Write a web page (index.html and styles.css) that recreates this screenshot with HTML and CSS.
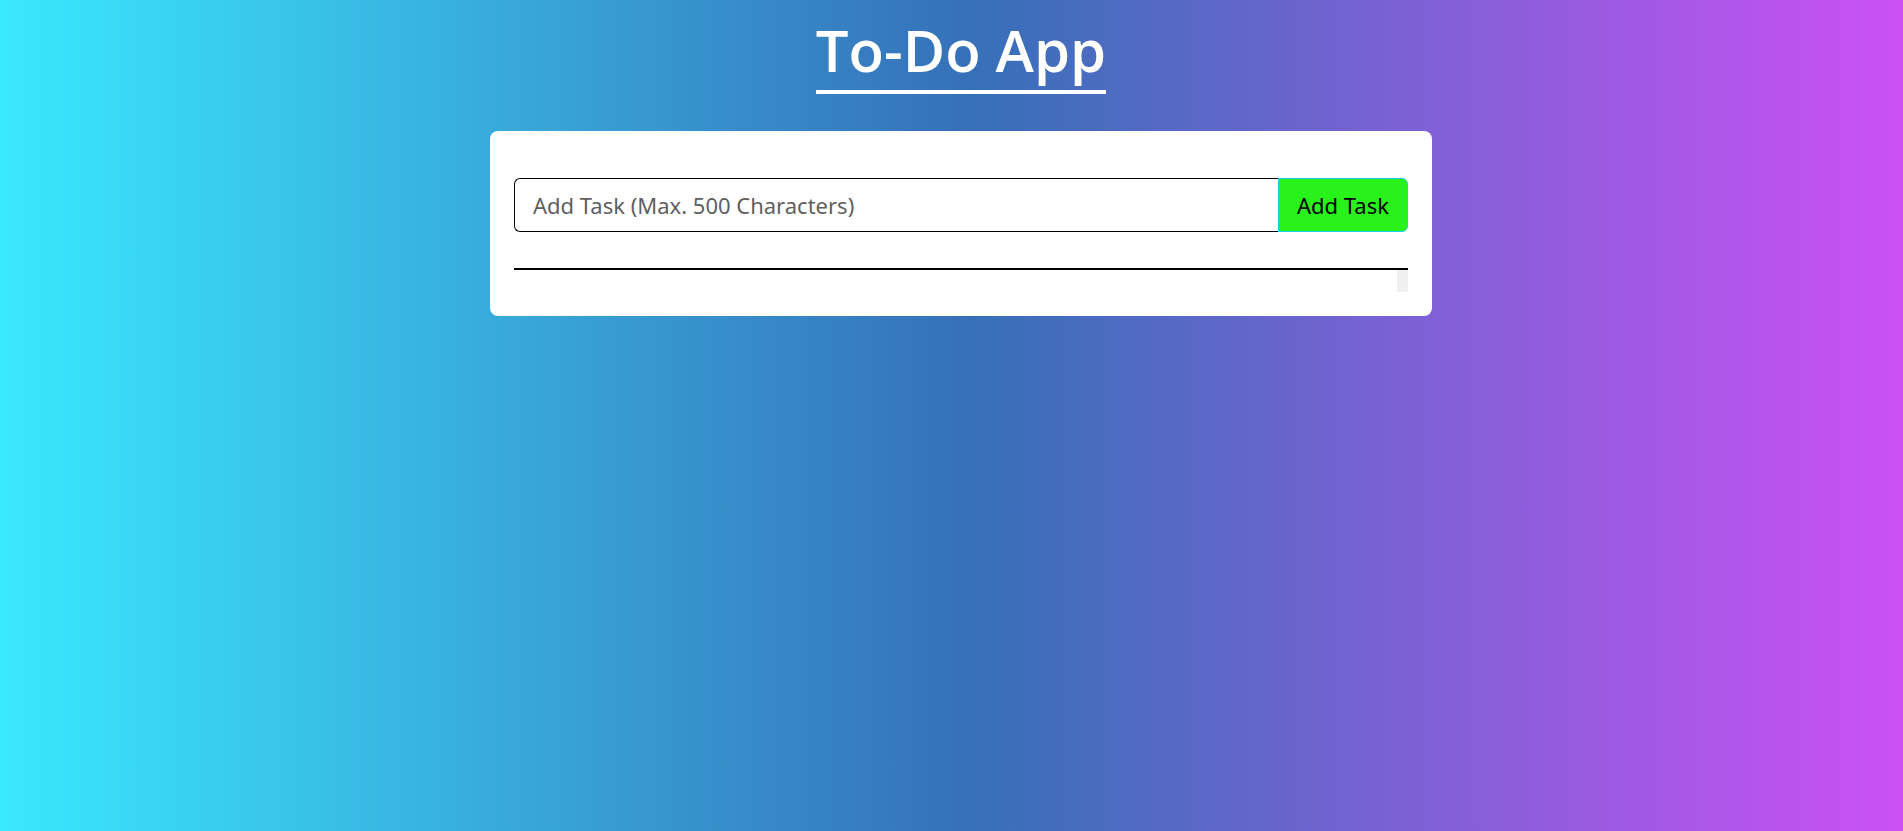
FILE: index.html
```html
<!DOCTYPE html>
<html lang="en">
<head>
<meta charset="utf-8">
<title>To-Do App</title>
<link rel="stylesheet" href="styles.css">
</head>
<body>
<main class="page">
  <h1 class="title">To-Do App</h1>
  <section class="card">
    <form class="add-form">
      <input class="task-input" type="text" placeholder="Add Task (Max. 500 Characters)">
      <button class="add-btn" type="button">Add Task</button>
    </form>
    <div class="task-list">
      <div class="list-body"></div>
      <div class="scroll-track"></div>
    </div>
  </section>
</main>
</body>
</html>
```
FILE: styles.css
```css
html, body {
  margin: 0;
  padding: 0;
  height: 100%;
}
body {
  background: linear-gradient(to right, #3ae8ff 0%, #3670b8 51%, #cc50f5 100%);
  font-family: "Noto Sans", "Open Sans", sans-serif;
  min-height: 831px;
}
.page {
  display: flex;
  flex-direction: column;
  align-items: center;
  padding-left: 19px;
}
.title {
  margin: 14px 0 0 0;
  color: #fff;
  font-family: "Open Sans", "Noto Sans", sans-serif;
  font-weight: 600;
  font-size: 58px;
  line-height: 72px;
  padding-bottom: 4px;
  border-bottom: 4px solid #fff;
}
.card {
  margin-top: 37px;
  width: 942px;
  box-sizing: border-box;
  background: #fff;
  border-radius: 8px;
  padding: 47px 24px 24px 24px;
}
.add-form {
  display: flex;
  margin: 0;
}
.task-input {
  flex: 1;
  height: 54px;
  box-sizing: border-box;
  border: 1px solid #000;
  border-right: none;
  border-radius: 6px 0 0 6px;
  padding: 0 18px;
  font-family: "Noto Sans", "Open Sans", sans-serif;
  font-size: 22px;
  color: #222;
  outline: none;
}
.task-input::placeholder {
  color: #5f5f5f;
}
.add-btn {
  width: 130px;
  height: 54px;
  box-sizing: border-box;
  background: #29f21b;
  border: 1px solid #1ad0e8;
  border-radius: 0 6px 6px 0;
  font-family: "Noto Sans", "Open Sans", sans-serif;
  font-size: 22px;
  color: #000;
  padding: 0;
}
.task-list {
  display: flex;
  margin-top: 36px;
  border-top: 2px solid #000;
  height: 22px;
}
.list-body {
  flex: 1;
}
.scroll-track {
  width: 11px;
  background: #f0f0f0;
}
```
